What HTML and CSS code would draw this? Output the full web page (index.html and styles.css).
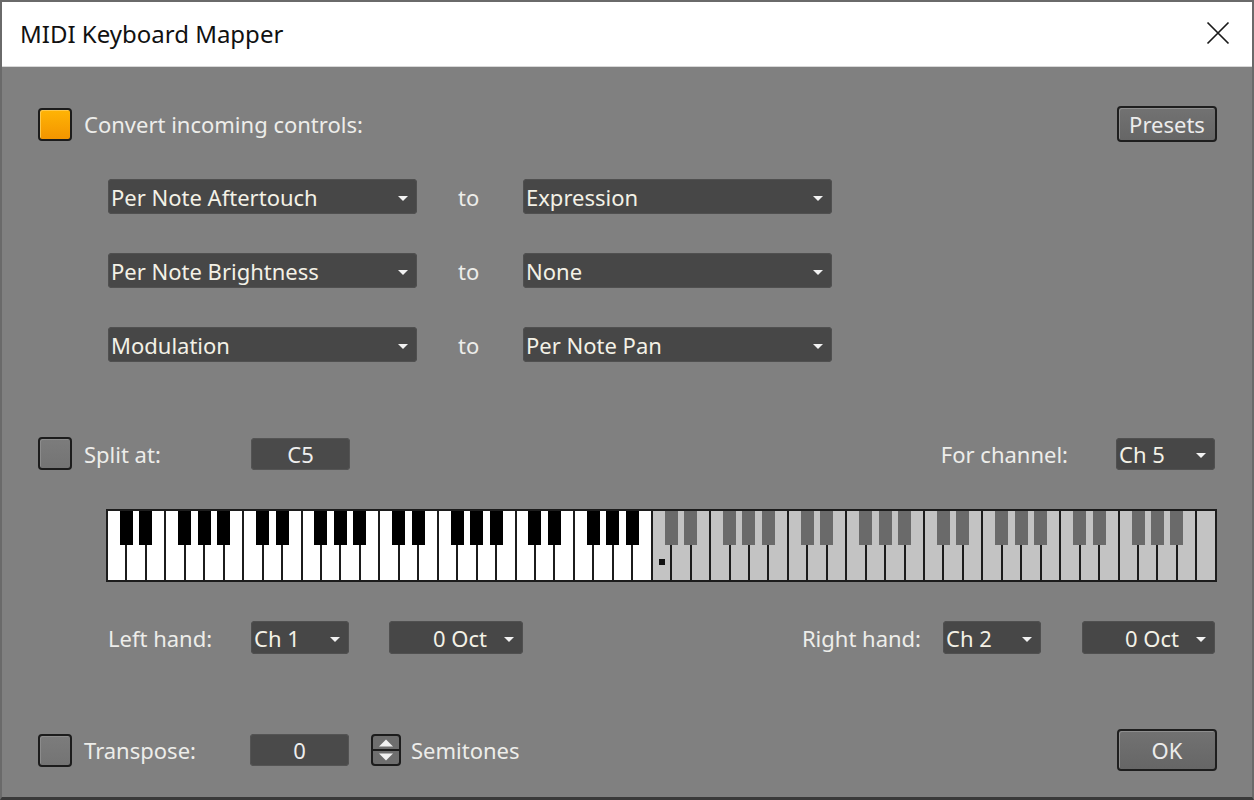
FILE: index.html
```html
<!DOCTYPE html>
<html>
<head>
<meta charset="utf-8">
<title>MIDI Keyboard Mapper</title>
<link rel="stylesheet" href="styles.css">
</head>
<body>
<div class="win">
  <header class="titlebar">
    <span class="title">MIDI Keyboard Mapper</span>
    <svg class="close" width="24" height="24" viewBox="0 0 24 24"><path d="M1.5 1.5L22.5 22.5M22.5 1.5L1.5 22.5" stroke="#1a1a1a" stroke-width="1.7" fill="none"/></svg>
  </header>
  <main class="body">
    <div class="row r1">
      <span class="cb on"></span>
      <span class="lbl first">Convert incoming controls:</span>
      <span class="spacer"></span>
      <span class="btn presets">Presets</span>
    </div>

    <div class="maps">
      <div class="map"><div class="dd wide">Per Note Aftertouch</div><span class="to">to</span><div class="dd wide">Expression</div></div>
      <div class="map"><div class="dd wide">Per Note Brightness</div><span class="to">to</span><div class="dd wide">None</div></div>
      <div class="map"><div class="dd wide">Modulation</div><span class="to">to</span><div class="dd wide">Per Note Pan</div></div>
    </div>

    <div class="row split">
      <span class="cb"></span>
      <span class="lbl first w-split">Split at:</span>
      <span class="field">C5</span>
      <span class="spacer"></span>
      <span class="lbl">For channel:</span>
      <div class="dd ch5">Ch 5</div>
    </div>

    <div class="kb">
      <i class="k b"></i><i class="k b"></i><i class="k"></i><i class="k b"></i><i class="k b"></i><i class="k b"></i><i class="k"></i>
      <i class="k b"></i><i class="k b"></i><i class="k"></i><i class="k b"></i><i class="k b"></i><i class="k b"></i><i class="k"></i>
      <i class="k b"></i><i class="k b"></i><i class="k"></i><i class="k b"></i><i class="k b"></i><i class="k b"></i><i class="k"></i>
      <i class="k b"></i><i class="k b"></i><i class="k"></i><i class="k b"></i><i class="k b"></i><i class="k b"></i><i class="k"></i>
      <i class="k off b"><span class="dot"></span></i><i class="k off b"></i><i class="k off"></i><i class="k off b"></i><i class="k off b"></i><i class="k off b"></i><i class="k off"></i>
      <i class="k off b"></i><i class="k off b"></i><i class="k off"></i><i class="k off b"></i><i class="k off b"></i><i class="k off b"></i><i class="k off"></i>
      <i class="k off b"></i><i class="k off b"></i><i class="k off"></i><i class="k off b"></i><i class="k off b"></i><i class="k off b"></i><i class="k off"></i>
      <i class="k off b"></i><i class="k off b"></i><i class="k off"></i><i class="k off b"></i><i class="k off b"></i><i class="k off b"></i><i class="k off"></i>
      <i class="k off"></i>
    </div>

    <div class="row hands">
      <span class="lbl w-left">Left hand:</span>
      <div class="dd ch">Ch 1</div>
      <div class="dd oct">0 Oct</div>
      <span class="spacer"></span>
      <span class="lbl">Right hand:</span>
      <div class="dd ch ch2">Ch 2</div>
      <div class="dd oct oct2">0 Oct</div>
    </div>

    <div class="row bottom">
      <span class="cb"></span>
      <span class="lbl first w-trans">Transpose:</span>
      <span class="field">0</span>
      <span class="spin">
        <svg width="30" height="32" viewBox="0 0 30 32">
          <rect x="1" y="1" width="28" height="30" rx="3" fill="#6e6e6e" stroke="#1c1c1c" stroke-width="2"/>
          <line x1="2" y1="16" x2="28" y2="16" stroke="#1c1c1c" stroke-width="2"/>
          <path d="M8 12.5L15 5.5L22 12.5Z" fill="#f2f2f2"/>
          <path d="M8 19.5L15 26.5L22 19.5Z" fill="#f2f2f2"/>
        </svg>
      </span>
      <span class="lbl semis">Semitones</span>
      <span class="spacer"></span>
      <span class="btn ok">OK</span>
    </div>
  </main>
</div>
</body>
</html>
```

FILE: styles.css
```css
html, body {
  margin: 0;
  padding: 0;
  background: #808080;
}

.win {
  width: 1254px;
  height: 800px;
  box-sizing: border-box;
  border: 2px solid #6a6a6a;
  border-bottom: 3px solid #3a3a3a;
  display: flex;
  flex-direction: column;
  overflow: hidden;
}

.titlebar {
  height: 65px;
  flex: none;
  background: #ffffff;
  display: flex;
  align-items: center;
  padding: 0 22px 0 18px;
  border-bottom: 1px solid #d8d8d8;
  box-sizing: border-box;
}

.title {
  font-family: "Noto Sans", "Open Sans", sans-serif;
  font-size: 24px;
  color: #111;
  margin-top: -1px;
}

.close {
  margin-left: auto;
  margin-top: -2px;
}

.body {
  flex: 1;
  background: #808080;
  padding: 39px 35px 0 36px;
  display: flex;
  flex-direction: column;
  font-family: "Noto Sans", "Open Sans", sans-serif;
  font-size: 22px;
  color: #ededea;
}

.row {
  display: flex;
  align-items: center;
}

.spacer {
  flex: 1;
}

.lbl {
  white-space: nowrap;
  line-height: 1;
}

.lbl.first {
  margin-left: 12px;
}

/* checkbox */
.cb {
  width: 34px;
  height: 33px;
  box-sizing: border-box;
  border: 2px solid #1c1c1c;
  border-radius: 4px;
  background: linear-gradient(#7c7c7c, #747474);
  box-shadow: inset 1px 1px 0 #8c8c8c;
  flex: none;
}

.cb.on {
  background: linear-gradient(#ffb405, #f39500);
  box-shadow: inset 1px 1px 0 #ffc84a;
}

/* buttons */
.btn {
  box-sizing: border-box;
  border: 2px solid #1e1e1e;
  border-radius: 4px;
  background: linear-gradient(#727272, #666666);
  box-shadow: inset 1px 1px 0 #8e8e8e;
  color: #ececec;
  display: flex;
  align-items: center;
  justify-content: center;
  line-height: 1;
}

.presets {
  width: 100px;
  height: 36px;
}

.ok {
  width: 100px;
  height: 42px;
}

/* dropdowns */
.dd {
  position: relative;
  box-sizing: border-box;
  height: 35px;
  background: #474747;
  border-radius: 4px;
  box-shadow: inset 0 0 0 1px #505050;
  color: #f3f1e6;
  display: flex;
  align-items: center;
  padding-left: 3px;
  white-space: nowrap;
  line-height: 1;
}

.dd::after {
  content: "";
  position: absolute;
  right: 9px;
  top: 50%;
  margin-top: -1px;
  border-left: 5px solid transparent;
  border-right: 5px solid transparent;
  border-top: 5px solid #f2f2f2;
}

.wide {
  width: 309px;
}

.maps {
  margin-top: 37px;
  margin-left: 70px;
  display: flex;
  flex-direction: column;
  gap: 39px;
}

.map {
  display: flex;
  align-items: center;
}

.to {
  width: 106px;
  box-sizing: border-box;
  padding-left: 41px;
  line-height: 1;
}

/* split row */
.split {
  margin-top: 75px;
  height: 33px;
}

.w-split {
  width: 167px;
}

.field {
  width: 99px;
  height: 32px;
  box-sizing: border-box;
  background: #4a4a4a;
  border-radius: 4px;
  box-shadow: inset 0 0 0 1px #545454;
  color: #eeeeee;
  display: flex;
  align-items: center;
  justify-content: center;
  line-height: 1;
  flex: none;
}

.ch5 {
  width: 99px;
  height: 32px;
  margin-left: 48px;
  margin-right: 2px;
}

/* keyboard */
.kb {
  margin-top: 39px;
  margin-left: 68px;
  width: 1111px;
  height: 73px;
  box-sizing: border-box;
  padding: 2px;
  gap: 2px;
  background: #1c1c1c;
  display: flex;
}

.k {
  flex: 1;
  background: #ffffff;
  position: relative;
}

.k.off {
  background: #c3c3c3;
}

.k.b::after {
  content: "";
  position: absolute;
  top: 0;
  right: -7.5px;
  width: 13px;
  height: 34px;
  background: #000000;
  z-index: 1;
}

.k.off.b::after {
  background: #6a6a6a;
}

.dot {
  position: absolute;
  left: 6px;
  top: 48px;
  width: 6px;
  height: 6px;
  background: #111111;
}

/* hands row */
.hands {
  margin-top: 39px;
  margin-left: 70px;
  height: 33px;
}

.w-left {
  width: 143px;
}

.dd.ch {
  width: 98px;
  height: 33px;
}

.dd.oct {
  width: 134px;
  height: 33px;
  margin-left: 40px;
  justify-content: flex-end;
  padding-right: 36px;
}

.dd.ch2 {
  margin-left: 22px;
}

.dd.oct2 {
  width: 133px;
  margin-left: 41px;
  margin-right: 2px;
}

/* bottom row */
.bottom {
  margin-top: 75px;
  height: 42px;
}

.w-trans {
  width: 166px;
  margin-left: 13px;
}

.spin {
  margin-left: 22px;
  width: 30px;
  height: 32px;
  display: flex;
}

.semis {
  margin-left: 10px;
}
```
